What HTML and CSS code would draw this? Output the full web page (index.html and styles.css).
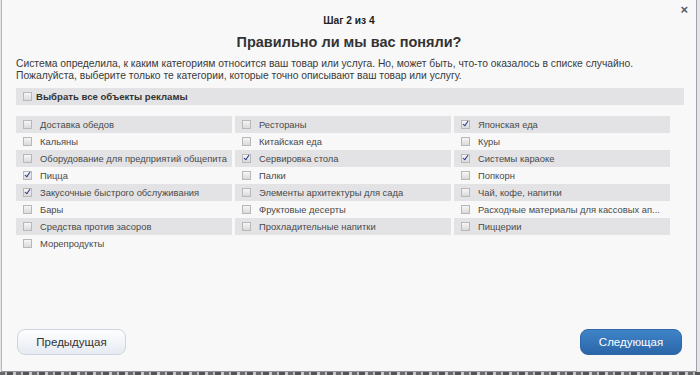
FILE: index.html
```html
<!DOCTYPE html>
<html lang="ru">
<head>
<meta charset="utf-8">
<link rel="stylesheet" href="styles.css">
</head>
<body>
<div class="dialog">
  <span class="close">×</span>
  <div class="step">Шаг 2 из 4</div>
  <h1 class="title">Правильно ли мы вас поняли?</h1>
  <p class="intro">Система определила, к каким категориям относится ваш товар или услуга. Но, может быть, что-то оказалось в списке случайно.<br>Пожалуйста, выберите только те категории, которые точно описывают ваш товар или услугу.</p>
  <div class="all"><span class="cb"></span><span>Выбрать все объекты рекламы</span></div>
  <div class="grid">
    <div class="col">
      <div class="item"><span class="cb"></span><span>Доставка обедов</span></div>
      <div class="item"><span class="cb"></span><span>Кальяны</span></div>
      <div class="item"><span class="cb"></span><span>Оборудование для предприятий общепита</span></div>
      <div class="item"><span class="cb on"></span><span>Пицца</span></div>
      <div class="item"><span class="cb on"></span><span>Закусочные быстрого обслуживания</span></div>
      <div class="item"><span class="cb"></span><span>Бары</span></div>
      <div class="item"><span class="cb"></span><span>Средства против засоров</span></div>
      <div class="item"><span class="cb"></span><span>Морепродукты</span></div>
    </div>
    <div class="col">
      <div class="item"><span class="cb"></span><span>Рестораны</span></div>
      <div class="item"><span class="cb"></span><span>Китайская еда</span></div>
      <div class="item"><span class="cb on"></span><span>Сервировка стола</span></div>
      <div class="item"><span class="cb"></span><span>Палки</span></div>
      <div class="item"><span class="cb"></span><span>Элементы архитектуры для сада</span></div>
      <div class="item"><span class="cb"></span><span>Фруктовые десерты</span></div>
      <div class="item"><span class="cb"></span><span>Прохладительные напитки</span></div>
    </div>
    <div class="col">
      <div class="item"><span class="cb on"></span><span>Японская еда</span></div>
      <div class="item"><span class="cb"></span><span>Куры</span></div>
      <div class="item"><span class="cb on"></span><span>Системы караоке</span></div>
      <div class="item"><span class="cb"></span><span>Попкорн</span></div>
      <div class="item"><span class="cb"></span><span>Чай, кофе, напитки</span></div>
      <div class="item"><span class="cb"></span><span>Расходные материалы для кассовых ап...</span></div>
      <div class="item"><span class="cb"></span><span>Пиццерии</span></div>
    </div>
  </div>
  <div class="spacer"></div>
  <div class="buttons">
    <button class="btn prev">Предыдущая</button>
    <button class="btn next">Следующая</button>
  </div>
</div>
<div class="under"></div>
</body>
</html>
```
FILE: styles.css
```css
html, body {
  margin: 0;
  padding: 0;
}
body {
  background: #e4e4e4;
  font-family: "Liberation Sans", Arial, sans-serif;
  overflow: hidden;
  height: 375px;
}
.dialog {
  position: relative;
  box-sizing: border-box;
  margin-left: 1px;
  width: 696px;
  height: 372px;
  background: #f8f8f8;
  border-left: 1px solid #b4b8c0;
  border-right: 1px solid #9ea3ab;
  border-bottom: 1px solid #8f949c;
  padding: 14px 14px 0 14px;
  display: flex;
  flex-direction: column;
}
.close {
  position: absolute;
  right: 8px;
  top: 2px;
  font-size: 13px;
  color: #555a66;
  font-weight: bold;
}
.step {
  text-align: center;
  font-size: 10.2px;
  font-weight: bold;
  color: #222;
  line-height: 13px;
}
.title {
  margin: 6px 0 0;
  text-align: center;
  font-size: 14.5px;
  font-weight: bold;
  color: #333;
  line-height: 18px;
}
.intro {
  margin: 7px 0 0;
  font-size: 10.3px;
  line-height: 12px;
  color: #3a3a3a;
}
.all {
  margin-top: 6px;
  height: 17px;
  background: #e3e3e6;
  display: flex;
  align-items: center;
  font-size: 9.6px;
  font-weight: bold;
  color: #333;
  width: 668px;
}
.cb {
  box-sizing: border-box;
  width: 9px;
  height: 9px;
  border: 1px solid #b8b8b8;
  background: linear-gradient(#f6f6f6, #dadada);
  margin: 0 4px 0 7px;
  flex: none;
  position: relative;
}
.cb.on::after {
  content: "";
  position: absolute;
  left: 2px;
  top: -1px;
  width: 2px;
  height: 5px;
  border: solid #2b3a8c;
  border-width: 0 1.5px 1.5px 0;
  transform: rotate(35deg);
}
.grid {
  margin-top: 11px;
  display: grid;
  grid-template-columns: 216px 216px 216px;
  column-gap: 3px;
}
.item {
  height: 17px;
  display: flex;
  align-items: center;
  font-size: 9.4px;
  color: #4a4a4a;
  white-space: nowrap;
}
.item .cb {
  margin-right: 8px;
}
.item:nth-child(odd) {
  background: #e3e3e6;
}
.col:first-child .item:last-child {
  background: none;
}
.spacer {
  flex: 1;
}
.buttons {
  display: flex;
  justify-content: space-between;
  padding: 0 0 16px 1px;
}
.btn {
  height: 26px;
  border-radius: 8px;
  font-family: "Liberation Sans", Arial, sans-serif;
  font-size: 11.5px;
  cursor: pointer;
}
.prev {
  width: 109px;
  border: 1px solid #cfd5de;
  background: linear-gradient(#fdfeff, #e6ebf2);
  color: #333;
}
.next {
  width: 102px;
  border: 1px solid #2f67a6;
  background: linear-gradient(#3f84c8, #2b66a8);
  color: #fff;
}
.under {
  height: 3px;
  background: repeating-linear-gradient(90deg, #6a6a6a 0 5px, #bdbdbd 5px 7px, #555 7px 13px, #c8c8c8 13px 16px);
}
```
